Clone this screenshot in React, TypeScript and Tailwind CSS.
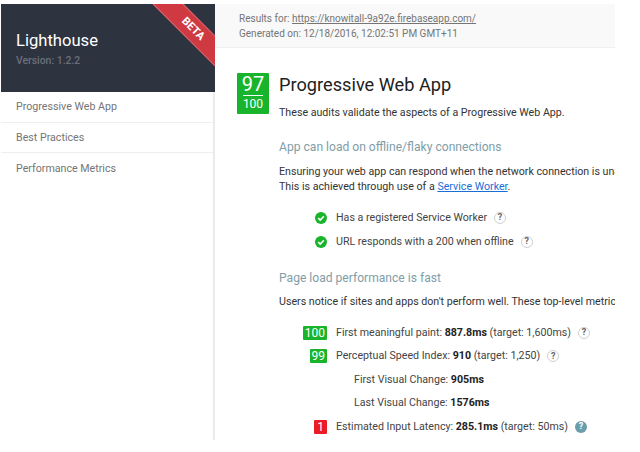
import type { ReactNode } from 'react'

function Help({ active }: { active?: boolean }) {
  return (
    <span
      className={
        active
          ? 'ml-[7px] flex size-[12px] shrink-0 items-center justify-center rounded-full bg-[#6b9dab] text-[9px] font-bold text-white'
          : 'ml-[7px] flex size-[12px] shrink-0 items-center justify-center rounded-full border border-[#d0d0d0] text-[9px] font-bold text-[#666]'
      }
    >
      ?
    </span>
  )
}

function Check() {
  return (
    <svg viewBox="0 0 12 12" className="size-3 shrink-0">
      <circle cx="6" cy="6" r="6" fill="#18b52c" />
      <path d="M3.2 6.2 5.2 8.1 8.9 4.3" fill="none" stroke="#fff" strokeWidth="1.6" />
    </svg>
  )
}

function CheckRow({ children }: { children: ReactNode }) {
  return (
    <div className="flex h-6 items-center pl-[36px] text-[#444]">
      <Check />
      <span className="ml-[9px]">{children}</span>
      <Help />
    </div>
  )
}

function Metric({
  score,
  bad,
  active,
  children,
}: {
  score?: string
  bad?: boolean
  active?: boolean
  children: ReactNode
}) {
  return (
    <div className="flex h-[23.5px] items-center text-[#444]">
      <div className="flex w-[48px] justify-end">
        {score && (
          <span
            className={
              bad
                ? 'rounded-[1px] bg-[#eb1c26] px-[3px] text-[12px] leading-[14px] text-white'
                : 'rounded-[1px] bg-[#18b52c] px-[2px] text-[12px] leading-[14px] text-white'
            }
          >
            {score}
          </span>
        )}
      </div>
      <div className={score ? 'ml-[9px]' : 'ml-[27px]'}>{children}</div>
      {score && <Help active={active} />}
    </div>
  )
}

function NavItem({ label }: { label: string }) {
  return (
    <div className="flex h-[30.5px] items-center border-b border-[#eee] pl-[15px] pt-px last:border-b-0">
      {label}
    </div>
  )
}

export default function App() {
  return (
    <div className="h-[452px] w-[640px] overflow-hidden bg-white pl-px pt-1 font-['Roboto',sans-serif] text-[10.67px]">
      <div className="flex h-[436px] w-[614px] overflow-hidden">
        <aside className="w-[214px] shrink-0 border-r-2 border-[#eaeaea] text-[#757575]">
          <div className="relative mr-[-2px] h-[88px] overflow-hidden bg-[#2e3340] pl-[15px] pt-[25px]">
            <div className="text-[16.6px] leading-6 text-white">Lighthouse</div>
            <div className="text-[10.4px] leading-[16px] font-medium text-[#6b6f78]">Version: 1.2.2</div>
            <div className="absolute right-[-38px] top-[14px] flex h-[22px] w-[120px] rotate-45 items-center justify-center border-y border-[#dc6a70] bg-[#cf3a42] text-[11px] font-bold text-white">
              BETA
            </div>
          </div>
          <div>
            <NavItem label="Progressive Web App" />
            <NavItem label="Best Practices" />
            <NavItem label="Performance Metrics" />
          </div>
        </aside>
        <main className="min-w-0 flex-1">
          <header className="h-[44px] border-b border-[#f0f0f0] bg-[#f9f9f9] pl-[24px] pt-[7px] text-[10px] leading-[15px] text-[#757575]">
            <div className="whitespace-nowrap">
              Results for: <span className="underline">https://knowitall-9a92e.firebaseapp.com/</span>
            </div>
            <div>Generated on: 12/18/2016, 12:02:51 PM GMT+11</div>
          </header>
          <section className="flex pl-[22px] pt-[25px]">
            <div className="flex h-[41px] w-[32px] shrink-0 flex-col items-center rounded-[1px] bg-[#18b52c] text-white">
              <div className="text-[20px] leading-[22px]">97</div>
              <div className="h-px w-[20px] bg-white" />
              <div className="text-[12px] leading-[17px]">100</div>
            </div>
            <div className="ml-[10px] min-w-0 flex-1 whitespace-nowrap text-[#333]">
              <h1 className="text-[18.2px] leading-[24px] text-[#222]">Progressive Web App</h1>
              <p className="mt-[8px] leading-[15px]">These audits validate the aspects of a Progressive Web App.</p>
              <h2 className="mt-[18px] text-[12.1px] leading-[18px] text-[#7f9ea8]">
                App can load on offline/flaky connections
              </h2>
              <p className="mt-[8px] leading-[15px]">
                Ensuring your web app can respond when the network connection is unavailable
                <br />
                This is achieved through use of a{' '}
                <span className="text-[#1a6ed8] underline">Service Worker</span>.
              </p>
              <div className="mt-[12px]">
                <CheckRow>Has a registered Service Worker</CheckRow>
                <CheckRow>URL responds with a 200 when offline</CheckRow>
              </div>
              <h2 className="mt-[15px] text-[12.1px] leading-[18px] text-[#7f9ea8]">Page load performance is fast</h2>
              <p className="mt-[7px] leading-[15px]">
                Users notice if sites and apps don't perform well. These top-level metrics
              </p>
              <div className="mt-[12px]">
                <Metric score="100">
                  First meaningful paint: <b className="text-[#222]">887.8ms</b> (target: 1,600ms)
                </Metric>
                <Metric score="99">
                  Perceptual Speed Index: <b className="text-[#222]">910</b> (target: 1,250)
                </Metric>
                <Metric>
                  First Visual Change: <b className="text-[#222]">905ms</b>
                </Metric>
                <Metric>
                  Last Visual Change: <b className="text-[#222]">1576ms</b>
                </Metric>
                <Metric score="1" bad active>
                  Estimated Input Latency: <b className="text-[#222]">285.1ms</b> (target: 50ms)
                </Metric>
              </div>
            </div>
          </section>
        </main>
      </div>
    </div>
  )
}
